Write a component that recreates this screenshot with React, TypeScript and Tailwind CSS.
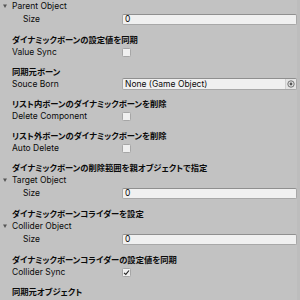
import React from "react";

const latin = { fontFamily: 'Inter, "Noto Sans CJK JP", sans-serif' };
const jp = { fontFamily: '"Noto Sans CJK JP", sans-serif' };

function Header({ children }: { children: React.ReactNode }) {
  return (
    <div
      className="mt-[6px] flex h-[13px] items-center whitespace-nowrap pl-[12px] text-[8.3px] font-bold text-[#0a0a0a] [font-feature-settings:'palt']"
      style={jp}
    >
      {children}
    </div>
  );
}

function Foldout({ label }: { label: string }) {
  return (
    <div className="flex h-[13px] items-center text-[8.5px] text-[#0a0a0a]">
      <svg width="12" height="13" viewBox="0 0 12 13" className="shrink-0">
        <path d="M3 4.5 L7 4.5 L5 8 Z" fill="#555" />
      </svg>
      <span>{label}</span>
    </div>
  );
}

function SizeRow() {
  return (
    <div className="flex h-[14px] items-center text-[8.5px] text-[#0a0a0a]">
      <span className="w-[122px] shrink-0 pl-[23px]">Size</span>
      <div className="flex h-[11.5px] w-[175px] items-center rounded-[2px] border border-[#a8a8a8] border-t-[#8f8f8f] bg-[#f0f0f0] pl-[2px]">
        0
      </div>
    </div>
  );
}

function Toggle({ label, checked }: { label: string; checked?: boolean }) {
  return (
    <div className="flex h-[13px] items-center text-[8.5px] text-[#0a0a0a]">
      <span className="w-[122px] shrink-0 pl-[12px]">{label}</span>
      <div className="flex h-[9px] w-[9px] items-center justify-center rounded-[1.5px] border border-[#a6a6a6] bg-[#f0f0f0]">
        {checked && (
          <svg width="7" height="7" viewBox="0 0 7 7">
            <path d="M1 3.8 L2.8 5.4 L6 1.5" fill="none" stroke="#222" strokeWidth="1.1" />
          </svg>
        )}
      </div>
    </div>
  );
}

export default function App() {
  return (
    <div className="h-[300px] w-[300px] overflow-hidden bg-[#c2c2c2]" style={latin}>
      <div className="flex">
        <div className="w-[297px]">
          <div className="-mt-[0.5px]">
            <Foldout label="Parent Object" />
          </div>
          <SizeRow />
          <Header>ダイナミックボーンの設定値を同期</Header>
          <Toggle label="Value Sync" />
          <Header>同期元ボーン</Header>
          <div className="flex h-[13px] items-center text-[8.5px] text-[#0a0a0a]">
            <span className="w-[122px] shrink-0 pl-[12px]">Souce Born</span>
            <div className="flex h-[11.5px] w-[175px] items-center justify-between rounded-[2px] border border-[#a8a8a8] border-t-[#8f8f8f] bg-[#f0f0f0] pl-[2px]">
              <span>None (Game Object)</span>
              <div className="flex h-full w-[11px] items-center justify-center border-l border-[#d0d0d0] bg-[#e4e4e4]">
                <svg width="8" height="8" viewBox="0 0 8 8">
                  <circle cx="4" cy="4" r="3.2" fill="none" stroke="#555" strokeWidth="0.8" />
                  <circle cx="4" cy="4" r="1.4" fill="#555" />
                </svg>
              </div>
            </div>
          </div>
          <Header>リスト内ボーンのダイナミックボーンを削除</Header>
          <Toggle label="Delete Component" />
          <Header>リスト外ボーンのダイナミックボーンを削除</Header>
          <Toggle label="Auto Delete" />
          <Header>ダイナミックボーンの削除範囲を親オブジェクトで指定</Header>
          <Foldout label="Target Object" />
          <SizeRow />
          <Header>ダイナミックボーンコライダーを設定</Header>
          <Foldout label="Collider Object" />
          <SizeRow />
          <Header>ダイナミックボーンコライダーの設定値を同期</Header>
          <Toggle label="Collider Sync" checked />
          <Header>同期元オブジェクト</Header>
        </div>
        <div className="h-[300px] w-[3px] bg-[#bdbdbd]" />
      </div>
    </div>
  );
}
